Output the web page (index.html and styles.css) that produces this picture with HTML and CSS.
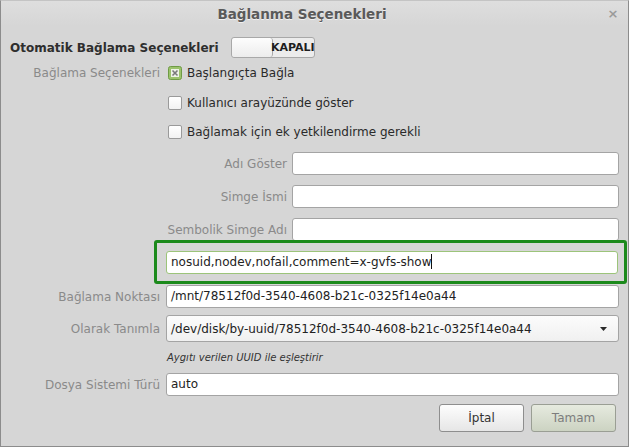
FILE: index.html
```html
<!DOCTYPE html>
<html lang="tr">
<head>
    <meta charset="UTF-8">
    <meta name="viewport" content="width=device-width, initial-scale=1.0">
    <title>Bağlanma Seçenekleri</title>
    <link rel="stylesheet" href="styles.css">
</head>
<body>
    <div class="window">
        <div class="titlebar">
            <span></span>
            <span class="title">Bağlanma Seçenekleri</span>
            <span class="close">×</span>
        </div>

        <div class="content">
            <!-- Otomatik bağlama anahtarı -->
            <div class="auto-row">
                <span class="auto-label">Otomatik Bağlama Seçenekleri</span>
                <div class="switch">
                    <span class="knob"></span>
                    <span class="state">KAPALI</span>
                </div>
            </div>

            <div class="row check-row first">
                <span class="label">Bağlama Seçenekleri</span>
                <label class="check">
                    <svg class="box" width="14" height="14" viewBox="0 0 14 14">
                        <rect x="0.5" y="0.5" width="13" height="13" rx="2" fill="#9cc36c" stroke="#6f9b45"/>
                        <rect x="3" y="3" width="8" height="8" fill="#eef3e6"/>
                        <path d="M4.5 4.5 L9.5 9.5 M9.5 4.5 L4.5 9.5" stroke="#7a7a7a" stroke-width="1.6"/>
                    </svg>
                    Başlangıçta Bağla
                </label>
            </div>
            <div class="row check-row second">
                <span></span>
                <label class="check"><span class="box empty"></span>Kullanıcı arayüzünde göster</label>
            </div>
            <div class="row check-row third">
                <span></span>
                <label class="check"><span class="box empty"></span>Bağlamak için ek yetkilendirme gerekli</label>
            </div>

            <!-- Simge ve ad alanları -->
            <div class="row sub-row first-entry">
                <span></span>
                <div class="sub">
                    <span class="label">Adı Göster</span>
                    <div class="entry"></div>
                </div>
            </div>
            <div class="row sub-row">
                <span></span>
                <div class="sub">
                    <span class="label">Simge İsmi</span>
                    <div class="entry"></div>
                </div>
            </div>
            <div class="row sub-row">
                <span></span>
                <div class="sub">
                    <span class="label">Sembolik Simge Adı</span>
                    <div class="entry"></div>
                </div>
            </div>

            <div class="row options-row">
                <span></span>
                <div class="highlight">
                    <div class="entry">nosuid,nodev,nofail,comment=x-gvfs-show<span class="caret"></span></div>
                </div>
            </div>

            <div class="row point-row">
                <span class="label">Bağlama Noktası</span>
                <div class="entry">/mnt/78512f0d-3540-4608-b21c-0325f14e0a44</div>
            </div>
            <div class="row combo-row">
                <span class="label">Olarak Tanımla</span>
                <div class="combo">
                    <span>/dev/disk/by-uuid/78512f0d-3540-4608-b21c-0325f14e0a44</span>
                    <svg width="7" height="4" viewBox="0 0 7 4"><path d="M0 0 H7 L3.5 4 Z" fill="#2a2a2a"/></svg>
                </div>
            </div>
            <div class="row hint-row">
                <span></span>
                <span class="hint">Aygıtı verilen UUID ile eşleştirir</span>
            </div>
            <div class="row fs-row">
                <span class="label">Dosya Sistemi Türü</span>
                <div class="entry">auto</div>
            </div>

            <div class="buttons">
                <button class="btn">İptal</button>
                <button class="btn ok">Tamam</button>
            </div>
        </div>
    </div>
</body>
</html>
```

FILE: styles.css
```css
body {
    margin: 0;
    background: #d6d6d6;
    font-family: "DejaVu Sans", sans-serif;
    font-size: 12px;
    color: #333;
}

.window {
    box-sizing: border-box;
    width: 629px;
    height: 447px;
    border: 1px solid #8c8c8c;
    border-top-color: #c4c4c4;
    background: #d6d6d6;
}

.titlebar {
    display: grid;
    grid-template-columns: 15px 1fr 40px;
    align-items: center;
    height: 25px;
    background: linear-gradient(#dedede, #d6d6d6);
}

.title {
    text-align: center;
    font-weight: bold;
    font-size: 13.5px;
    color: #5a5a5a;
    text-shadow: 0 1px 0 #f0f0f0;
}

.close {
    text-align: center;
    padding-left: 10px;
    color: #9a9a9a;
    font-size: 13px;
    font-weight: bold;
}

.content {
    padding: 0 9px 0 0;
}

/* Otomatik bağlama satırı */
.auto-row {
    display: flex;
    align-items: center;
    height: 21px;
    margin-top: 11px;
    padding-left: 9px;
}

.auto-label {
    font-weight: bold;
    font-size: 12px;
    color: #2e2e2e;
    width: 221px;
}

.switch {
    display: flex;
    width: 82px;
    height: 19px;
    border: 1px solid #a8a8a8;
    border-radius: 3px;
    overflow: hidden;
    background: #ececec;
}

.knob {
    box-sizing: border-box;
    flex: none;
    width: 41px;
    height: 100%;
    background: linear-gradient(#fdfdfd, #ececec);
    border-right: 1px solid #a8a8a8;
    border-radius: 3px;
}

.state {
    font-weight: bold;
    font-size: 11px;
    color: #1e1e1e;
    line-height: 19px;
    white-space: nowrap;
    margin-left: -2px;
}

/* Form satırları */
.row {
    display: grid;
    grid-template-columns: 159px 1fr;
    column-gap: 6px;
    align-items: center;
}

.label {
    text-align: right;
    color: #8a8a8a;
    white-space: nowrap;
}

.check-row {
    height: 22px;
}

.check-row.first { margin-top: 4px; }
.check-row.second { margin-top: 8px; }
.check-row.third { margin-top: 7px; }

.check {
    display: flex;
    align-items: center;
    gap: 5px;
    color: #2a2a2a;
    padding-left: 2px;
}

.box.empty {
    box-sizing: border-box;
    width: 14px;
    height: 14px;
    border: 1px solid #9a9a9a;
    border-radius: 2px;
    background: linear-gradient(#ffffff, #f2f2f2);
}

.entry {
    box-sizing: border-box;
    height: 23px;
    line-height: 21px;
    padding: 0 4px;
    background: #fff;
    border: 1px solid #a4a4a4;
    border-radius: 3px;
    color: #222;
    white-space: nowrap;
}

.sub {
    display: grid;
    grid-template-columns: 121px 1fr;
    column-gap: 5px;
    align-items: center;
}

.sub-row {
    margin-top: 10px;
}

.sub-row.first-entry {
    margin-top: 9px;
}

.highlight {
    box-sizing: border-box;
    height: 44px;
    margin-left: -12px;
    margin-right: -8px;
    padding: 8px 6px 0 9px;
    border: 3px solid #1c8a1c;
    border-radius: 3px;
}

.highlight .entry {
    border-color: #9cc47a;
}

.caret {
    display: inline-block;
    width: 1px;
    height: 15px;
    background: #111;
    vertical-align: -3px;
}

.options-row {
    margin-top: -1px;
}

.point-row {
    margin-top: 1px;
}

.combo-row {
    margin-top: 7px;
}

.combo {
    box-sizing: border-box;
    display: flex;
    justify-content: space-between;
    align-items: center;
    height: 27px;
    padding: 0 11px 0 4px;
    border: 1px solid #a4a4a4;
    border-radius: 3px;
    background: linear-gradient(#fcfcfc, #f0f0f0);
    color: #222;
}

.hint-row {
    margin-top: 8px;
    height: 14px;
}

.hint {
    font-style: italic;
    font-size: 10px;
    color: #333;
    padding-left: 1px;
}

.fs-row {
    margin-top: 9px;
}

.buttons {
    display: flex;
    justify-content: flex-end;
    gap: 7px;
    margin-top: 8px;
    padding-right: 3px;
}

.btn {
    box-sizing: border-box;
    width: 85px;
    height: 28px;
    font-family: "DejaVu Sans", sans-serif;
    font-size: 12px;
    color: #333;
    border: 1px solid #8e8e8e;
    border-radius: 3px;
    background: linear-gradient(#fdfdfd, #e6e6e6);
}

.btn.ok {
    color: #7d7d7d;
    border-color: #9a9e94;
    background: linear-gradient(#e6eadf, #ccd3c2);
}
```
